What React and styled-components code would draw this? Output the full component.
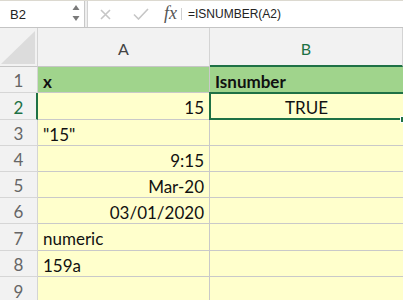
import React from 'react'
import styled, {createGlobalStyle} from 'styled-components'

const GlobalStyle = createGlobalStyle`
  body {
    margin: 0;
    background: #ffffff;
    overflow: hidden;
  }
  * {
    box-sizing: border-box;
  }
`

const green = '#1e7145'

const rows = [
    {h: 26, a: 'x', b: 'Isnumber', head: true},
    {h: 27, a: '15', alignA: 'right', b: 'TRUE', alignB: 'center', selected: true},
    {h: 26, a: '"15"'},
    {h: 26, a: '9:15', alignA: 'right'},
    {h: 26, a: 'Mar-20', alignA: 'right'},
    {h: 26, a: '03/01/2020', alignA: 'right'},
    {h: 27, a: 'numeric'},
    {h: 26, a: '159a'},
    {h: 27, a: ''},
]

export default function App () {
    return (
        <>
            <GlobalStyle />
            <Sheet>
                <FormulaBar>
                    <NameBox>
                        <span>B2</span>
                        <Spinner>
                            <svg width="8" height="17" viewBox="0 0 8 17">
                                <path d="M4 0 L7.5 5 L0.5 5 Z" fill="#7a7a7a" />
                                <path d="M0.5 11 L7.5 11 L4 16 Z" fill="#7a7a7a" />
                            </svg>
                        </Spinner>
                    </NameBox>
                    <Divider />
                    <Tools>
                        <svg width="11" height="11" viewBox="0 0 11 11">
                            <path d="M1 1 L10 10 M10 1 L1 10" stroke="#c6c6c6" strokeWidth="1.6" fill="none" />
                        </svg>
                        <svg width="16" height="12" viewBox="0 0 16 12">
                            <path d="M1 6.5 L5.5 11 L15 1" stroke="#c6c6c6" strokeWidth="1.6" fill="none" />
                        </svg>
                        <Fx>fx</Fx>
                    </Tools>
                    <Sep />
                    <Formula>=ISNUMBER(A2)</Formula>
                </FormulaBar>

                <Grid>
                    <Corner>
                        <svg width="34" height="33" viewBox="0 0 34 33">
                            <path d="M34 0 L34 33 L0 33 Z" fill="#dcdcdc" />
                        </svg>
                    </Corner>
                    <ColHead>A</ColHead>
                    <ColHead active>B</ColHead>

                    {rows.map((r, i) => (
                        <React.Fragment key={i}>
                            <RowHead h={r.h} active={r.selected}>{i + 1}</RowHead>
                            <Cell h={r.h} fill={r.head ? 'green' : 'yellow'} align={r.alignA} bold={r.head}>
                                {r.a}
                            </Cell>
                            <Cell h={r.h} fill={r.head ? 'green' : 'yellow'} align={r.alignB} bold={r.head} last>
                                {r.b}
                                {r.selected && <Selection><Handle /></Selection>}
                            </Cell>
                        </React.Fragment>
                    ))}
                </Grid>
            </Sheet>
        </>
    )
}

const Sheet = styled.div`
    width: 403px;
    height: 300px;
    overflow: hidden;
    background: #ffffff;
`

const FormulaBar = styled.div`
    height: 28px;
    display: flex;
    align-items: stretch;
    border-top: 1px solid #dcd9d0;
    border-bottom: 1px solid #c4c4c4;
    background: #ffffff;
`

const NameBox = styled.div`
    width: 85px;
    display: flex;
    align-items: center;
    justify-content: space-between;
    padding: 0 4px 0 10px;
    border-right: 1px solid #c8c8c8;
    font-family: "Liberation Sans", Arial, sans-serif;
    font-size: 13px;
    color: #222;
`

const Spinner = styled.div`
    display: flex;
    align-items: center;
    margin-top: -1px;
`

const Divider = styled.div`
    width: 3px;
    background: #eeeeee;
    border-right: 1px solid #d2d2d2;
`

const Tools = styled.div`
    width: 93px;
    display: flex;
    align-items: center;
    padding-left: 12px;
    svg:nth-child(1) {
        margin-right: 22px;
    }
    svg:nth-child(2) {
        margin-right: 15px;
    }
`

const Fx = styled.span`
    font-family: "Liberation Serif", "Times New Roman", serif;
    font-style: italic;
    font-size: 18px;
    color: #555;
    margin-top: -2px;
`

const Sep = styled.div`
    width: 1px;
    margin: 7px 0;
    background: #d0d0d0;
`

const Formula = styled.div`
    display: flex;
    align-items: center;
    padding-left: 6px;
    font-family: "Liberation Sans", Arial, sans-serif;
    font-size: 12px;
    color: #222;
`

const Grid = styled.div`
    display: grid;
    grid-template-columns: 38px 172px 1fr;
    font-family: Lato, "Open Sans", sans-serif;
`

const Corner = styled.div`
    height: 39px;
    background: #f2f2f2;
    border-right: 1px solid #d4d4d4;
    border-bottom: 1px solid #c6c6c6;
    display: flex;
    align-items: flex-end;
    justify-content: flex-end;
    padding: 0 2px 2px 0;
`

const ColHead = styled.div`
    height: 39px;
    background: #f2f2f2;
    border-right: 1px solid #d4d4d4;
    border-bottom: ${(p) => (p.active ? `2px solid ${green}` : '1px solid #c6c6c6')};
    display: flex;
    align-items: center;
    justify-content: center;
    padding-top: ${(p) => (p.active ? '3px' : '2px')};
    font-size: 16px;
    color: ${(p) => (p.active ? green : '#444')};
`

const RowHead = styled.div`
    height: ${(p) => p.h}px;
    background: #f2f2f2;
    border-right: ${(p) => (p.active ? `2px solid ${green}` : '1px solid #d4d4d4')};
    border-bottom: 1px solid #d6d6d6;
    display: flex;
    align-items: center;
    justify-content: center;
    padding: 2px 0 0 ${(p) => (p.active ? '1px' : '0')};
    font-size: 17px;
    color: ${(p) => (p.active ? green : '#666')};
`

const Cell = styled.div`
    position: relative;
    height: ${(p) => p.h}px;
    background: ${(p) => (p.fill === 'green' ? '#a0d48c' : '#ffffcc')};
    border-right: ${(p) => (p.last ? 'none' : '1px solid #c9c9c9')};
    border-bottom: 1px solid #c9c9c9;
    display: flex;
    align-items: center;
    justify-content: ${(p) => (p.align === 'right' ? 'flex-end' : p.align === 'center' ? 'center' : 'flex-start')};
    padding: 3px 5px 0 5px;
    font-size: 17px;
    font-weight: ${(p) => (p.bold ? 700 : 400)};
    color: #111;
    white-space: nowrap;
`

const Selection = styled.div`
    position: absolute;
    top: -1px;
    left: -1px;
    right: -2px;
    bottom: -1px;
    border: 2px solid ${green};
    pointer-events: none;
    z-index: 2;
`

const Handle = styled.div`
    position: absolute;
    right: -4px;
    bottom: -5px;
    width: 7px;
    height: 7px;
    background: ${green};
    border: 1px solid #ffffff;
`
